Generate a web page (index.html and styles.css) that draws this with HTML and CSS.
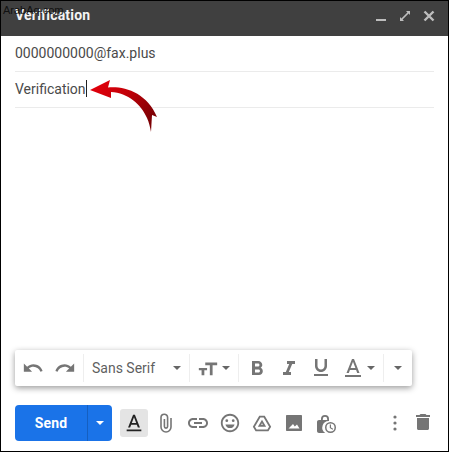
FILE: index.html
```html
<!DOCTYPE html>
<html lang="en">
<head>
<meta charset="utf-8">
<title>Verification</title>
<link rel="stylesheet" href="styles.css">
</head>
<body>
<div class="compose">
  <header class="head">
    <span class="title">Verification</span>
    <div class="win">
      <svg class="wi" viewBox="0 0 14 14"><rect x="2" y="10" width="10" height="2" fill="#bdbdbd"/></svg>
      <svg class="wi" viewBox="0 0 14 14"><path d="M8 2h4v4l-1.400-1.400-6 6L6 12H2V8l1.400 1.400 6-6z" fill="#bdbdbd"/></svg>
      <svg class="wi" viewBox="0 0 14 14"><path d="M2.500 2.500l9 9M11.500 2.500l-9 9" stroke="#bdbdbd" stroke-width="2.400" fill="none"/></svg>
    </div>
  </header>
  <div class="row">0000000000@fax.plus</div>
  <div class="row subject">Verification<i class="caret"></i></div>
  <div class="body"></div>
  <div class="fmt">
    <svg class="ic sm" viewBox="0 0 24 24"><path d="M12.500 8c-2.650 0-5.050 1-6.900 2.600L2 7v9h9l-3.620-3.620c1.390-1.160 3.160-1.880 5.120-1.880 3.540 0 6.550 2.310 7.600 5.500l2.370-.78C21.080 11.030 17.150 8 12.500 8z"/></svg>
    <svg class="ic sm" viewBox="0 0 24 24"><path d="M18.400 10.600C16.550 9 14.150 8 11.500 8c-4.650 0-8.580 3.030-9.960 7.220L3.900 16c1.050-3.190 4.050-5.500 7.600-5.500 1.950 0 3.730.72 5.120 1.880L13 16h9V7z"/></svg>
    <i class="sep s1"></i>
    <span class="font">Sans Serif</span>
    <i class="tri t1"></i>
    <i class="sep s2"></i>
    <svg class="ic size" viewBox="0 0 24 24"><path d="M9 6v3h5v11h3V9h5V6zM2 12v2.500h3V20h3v-5.500h3V12z"/></svg>
    <i class="tri t2"></i>
    <i class="sep s3"></i>
    <svg class="ic bold" viewBox="0 0 24 24"><path d="M15.600 11.800C16.600 11.100 17.300 10 17.300 9c0-2.300-1.800-4-4-4H7v14h7c2.100 0 3.800-1.700 3.800-3.800 0-1.500-.9-2.800-2.200-3.400zM10 7.500h3c.8 0 1.500.7 1.500 1.500s-.7 1.500-1.500 1.500h-3zm3.500 9H10v-3h3.500c.8 0 1.500.7 1.500 1.500s-.7 1.500-1.500 1.500z" fill-rule="evenodd"/></svg>
    <svg class="ic" viewBox="0 0 24 24"><path d="M10 5v3h2.200l-3.400 8H6v3h8v-3h-2.200l3.400-8H18V5z"/></svg>
    <svg class="ic" viewBox="0 0 24 24"><path d="M12 16c3.300 0 6-2.700 6-6V3h-2.500v7c0 1.900-1.600 3.500-3.500 3.500S8.500 11.900 8.500 10V3H6v7c0 3.300 2.700 6 6 6zM5 18v2h14v-2z"/></svg>
    <svg class="ic" viewBox="0 0 24 24"><path d="M11 3L5.500 17h2.300l1.100-3h6.200l1.100 3h2.300L13 3zm-1.400 9L12 5.700 14.400 12zM4 19h16v2H4z" fill-rule="evenodd"/></svg>
    <i class="tri t3"></i>
    <i class="sep s4"></i>
    <i class="tri t4"></i>
  </div>
  <footer class="actions">
    <div class="send">
      <span class="send-l">Send</span>
      <span class="send-r"><i class="tri white"></i></span>
    </div>
    <span class="active"><svg class="ic dark" viewBox="0 0 24 24"><path d="M11 3L5.500 17h2.300l1.100-3h6.200l1.100 3h2.300L13 3zm-1.400 9L12 5.700 14.400 12zM4 19h16v2H4z" fill-rule="evenodd"/></svg></span>
    <svg class="ic clip" viewBox="0 0 24 24"><path d="M17 7v9a5 5 0 0 1-10 0V6.500a3.300 3.300 0 0 1 6.600 0V15.500a1.600 1.600 0 0 1-3.200 0V8" fill="none" stroke="#757575" stroke-width="1.600"/></svg>
    <svg class="ic" viewBox="0 0 24 24"><path d="M3.900 12c0-1.700 1.400-3.100 3.100-3.100h4V7H7c-2.800 0-5 2.200-5 5s2.200 5 5 5h4v-1.900H7c-1.700 0-3.100-1.400-3.100-3.100zM8 13h8v-2H8zm9-6h-4v1.900h4c1.700 0 3.100 1.400 3.100 3.100s-1.400 3.100-3.100 3.100h-4V17h4c2.800 0 5-2.200 5-5s-2.200-5-5-5z"/></svg>
    <svg class="ic sm" viewBox="0 0 24 24"><path d="M12 2C6.500 2 2 6.500 2 12s4.500 10 10 10 10-4.500 10-10S17.500 2 12 2zm0 18c-4.400 0-8-3.600-8-8s3.600-8 8-8 8 3.600 8 8-3.600 8-8 8z"/><circle cx="8.500" cy="9.500" r="1.500"/><circle cx="15.500" cy="9.500" r="1.500"/><path d="M7 13.500h10c-.6 2.400-2.600 4-5 4s-4.400-1.600-5-4z"/></svg>
    <svg class="ic sm" viewBox="0 0 24 24"><path d="M9 4h6l7 12-3 5H5l-3-5zm1.200 2L4.300 16l1.800 3h11.800l1.800-3L13.800 6zM12 8.500l4.500 7.500h-9zm0 3.800L10.900 14h2.200z" fill-rule="evenodd"/></svg>
    <svg class="ic" viewBox="0 0 24 24"><path d="M4 5c0-.6.400-1 1-1h14c.6 0 1 .4 1 1v14c0 .6-.4 1-1 1H5c-.6 0-1-.4-1-1zM6.500 17.500h11L15 13.500l-2.200 2-1.800-2.500z" fill-rule="evenodd"/></svg>
    <svg class="ic" viewBox="0 0 24 24"><path d="M15 10.100V8a4 4 0 0 0-8 0v1H5c-1.100 0-2 .9-2 2v9c0 1.100.9 2 2 2h6.200a6.500 6.500 0 0 1 3.800-11.900zM8.800 9V8a2.200 2.200 0 0 1 4.400 0v1z" fill-rule="evenodd"/><path d="M16.500 11a5.500 5.500 0 1 0 0 11 5.500 5.500 0 0 0 0-11zm0 9.500a4 4 0 1 1 0-8 4 4 0 0 1 0 8zm.5-7h-1.200v3.500l2.800 1.700.6-1-2.200-1.300z"/></svg>
    <span class="spacer"></span>
    <svg class="ic dots" viewBox="0 0 24 24"><circle cx="12" cy="6" r="1.600"/><circle cx="12" cy="12" r="1.600"/><circle cx="12" cy="18" r="1.600"/></svg>
    <svg class="ic" viewBox="0 0 24 24"><path d="M9.500 3h5l1 1h3.500v2H5V4h3.500zM6 7h12v10.500c0 .8-.7 1.500-1.500 1.500h-9c-.8 0-1.500-.7-1.500-1.500z"/></svg>
  </footer>
  <svg class="arrow" viewBox="89 79 72 56">
    <defs><linearGradient id="g" x1="0" y1="0" x2="1" y2="0.6"><stop offset="0" stop-color="#e8000c"/><stop offset="0.5" stop-color="#c40008"/><stop offset="1" stop-color="#7d0004"/></linearGradient></defs>
    <path d="M90 90L110 80l-2 7.500C125 86 147 93 157 117l-5-2-1 17c-1-5-2-10-4-14C141 104 128 93 111 92l0 6z" fill="url(#g)"/>
  </svg>
  <span class="mark">ArabAq.com</span>
</div>
</body>
</html>
```
FILE: styles.css
```css
* { box-sizing: border-box; }
html, body { margin: 0; padding: 0; background: #fff; }
.compose {
  position: relative;
  width: 449px;
  height: 452px;
  border: 1px solid #000;
  display: flex;
  flex-direction: column;
  font-family: Roboto, "Liberation Sans", sans-serif;
  overflow: hidden;
}
.head {
  height: 35px;
  flex: none;
  background: #404040;
  display: flex;
  align-items: center;
  justify-content: space-between;
  padding: 0 12px 5px 14px;
}
.title { color: #f4f4f4; font-size: 14px; font-weight: 700; letter-spacing: .2px; margin-top: -2px; }
.win { display: flex; gap: 10px; }
.wi { width: 14px; height: 14px; display: block; }
.row {
  height: 36px;
  margin: 0 14px;
  padding-bottom: 2px;
  border-bottom: 1px solid #ebebeb;
  display: flex;
  align-items: center;
  font-size: 14px;
  color: #4a4a4a;
}
.caret { width: 1px; height: 17px; background: #222; }
.body { flex: 1; }
.fmt {
  height: 36px;
  flex: none;
  width: 397px;
  margin: 0 0 19px 14px;
  background: #fff;
  border-radius: 2px;
  box-shadow: 0 2px 6px rgba(0,0,0,.4);
  display: flex;
  align-items: center;
  padding-left: 6px;
  gap: 8px;
}
.ic { width: 24px; height: 24px; fill: #757575; flex: none; display: block; }
.sm { width: 22px; height: 22px; margin: 0 1px; }
.sep { width: 1px; height: 28px; background: #eee; flex: none; }
.font { font-size: 14px; color: #5f5f5f; width: 72px; flex: none; }
.tri {
  width: 0; height: 0; flex: none;
  border-left: 4px solid transparent;
  border-right: 4px solid transparent;
  border-top: 4px solid #666;
}
.t1 { margin: 0 1px; }
.s1 { margin-left: -2px; }
.s2 { margin-left: -1px; }
.size { width: 22px; height: 22px; margin-left: -1px; }
.t2 { margin: 0 1px 0 -5px; }
.s3 { margin-left: -1px; }
.bold { margin-left: -2px; }
.t3 { margin: 0 1px 0 -6px; }
.s4 { margin-left: -1px; }
.t4 { margin-left: 2px; }
.actions {
  height: 36px;
  flex: none;
  margin: 0 13px 10px 14px;
  display: flex;
  align-items: center;
  gap: 8px;
}
.send { display: flex; height: 36px; width: 97px; border-radius: 4px; overflow: hidden; background: #1a73e8; flex: none; }
.send-l { width: 72px; color: #fff; font-size: 14px; font-weight: 700; display: flex; align-items: center; justify-content: center; letter-spacing: .2px; }
.send-r { flex: 1; border-left: 1px solid #155fc0; display: flex; align-items: center; justify-content: center; }
.white { border-top-color: #fff; }
.active { width: 28px; height: 28px; background: #e4e4e4; border-radius: 3px; display: flex; align-items: center; justify-content: center; flex: none; }
.dark { fill: #222; width: 22px; height: 22px; }
.clip { margin-left: -2px; }
.spacer { flex: 1; }
.dots { margin-right: -4px; }
.arrow { position: absolute; left: 88px; top: 78px; width: 72px; height: 56px; }
.mark { position: absolute; left: 2px; top: 3px; font-size: 11px; color: #111; font-family: "Liberation Sans", sans-serif; }
```
